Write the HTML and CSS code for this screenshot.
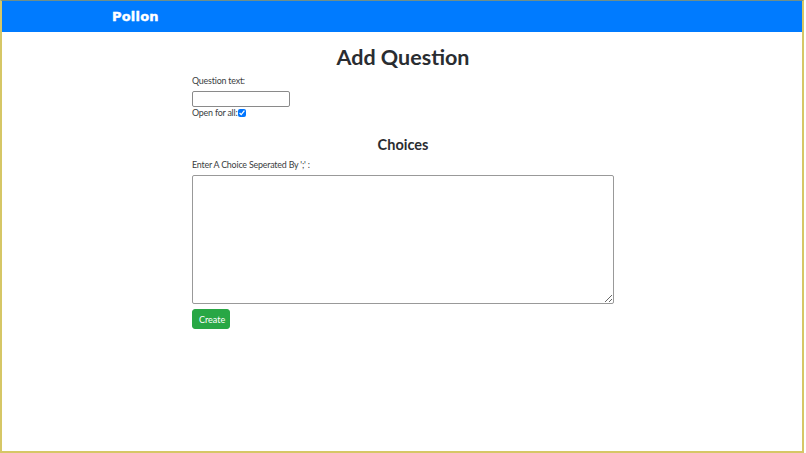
FILE: index.html
```html
<!DOCTYPE html>
<html lang="en">
  <head>
    <meta charset="UTF-8" />
    <meta name="viewport" content="width=device-width, initial-scale=1.0" />
    <title>Pollon - Add Question</title>
    <link rel="stylesheet" href="styles.css">
  </head>
  <body>
    <div class="frame">
      <nav class="navbar">
        <a class="brand" href="#">Pollon</a>
      </nav>

      <div class="container">
        <h1 class="title">Add Question</h1>
        <form class="question-form">
          <label class="field-label" for="question">Question text:</label>
          <input class="text-input" type="text" id="question" name="question">
          <div class="check-row">
            <label for="open">Open for all:</label><input class="check" type="checkbox" id="open" name="open" checked>
          </div>

          <h2 class="subtitle">Choices</h2>
          <label class="field-label" for="choices">Enter A Choice Seperated By ';' :</label>
          <textarea class="choices" id="choices" name="choices"></textarea>
          <button class="btn-create" type="submit">Create</button>
        </form>
      </div>
    </div>
  </body>
</html>
```

FILE: styles.css
```css
body {
  margin: 0;
  padding: 0;
  background: #fff;
  font-family: Lato, "Open Sans", sans-serif;
  color: #212529;
}
.frame {
  width: 804px;
  height: 453px;
  box-sizing: border-box;
  border: 2px solid #d6c766;
  border-top: 1px solid #6f8f8a;
}
.navbar {
  height: 31px;
  background: #007bff;
  display: flex;
  align-items: center;
  padding-left: 110px;
}
.brand {
  font-family: "DejaVu Sans", sans-serif;
  font-weight: bold;
  font-size: 13px;
  color: #fff;
  text-decoration: none;
  letter-spacing: 0.2px;
  -webkit-text-stroke: 0.4px #fff;
}
.container {
  width: 422px;
  margin: 0 auto;
  padding-left: 2px;
}
.title {
  margin: 11px 0 3px;
  text-align: center;
  font-size: 21.5px;
  font-weight: 700;
  line-height: 29px;
  color: #2a2d31;
}
.question-form {
  display: flex;
  flex-direction: column;
  align-items: flex-start;
  font-size: 8.9px;
  letter-spacing: -0.2px;
  line-height: 12px;
  color: #3a3d41;
}
.field-label {
  margin-bottom: 4px;
}
.text-input {
  width: 98px;
  height: 16px;
  box-sizing: border-box;
  border: 1px solid #8a8a8a;
  border-radius: 2px;
  margin: 0;
  padding: 0 3px;
}
.check-row {
  display: flex;
  align-items: center;
}
.check {
  width: 8px;
  height: 8px;
  margin: 0 0 0 1px;
  accent-color: #0075ff;
}
.subtitle {
  align-self: stretch;
  text-align: center;
  font-size: 14.5px;
  font-weight: 700;
  letter-spacing: 0;
  line-height: 19px;
  margin: 16px 0 5px;
  color: #2a2d31;
}
.choices {
  width: 422px;
  height: 129px;
  box-sizing: border-box;
  border: 1px solid #999;
  border-radius: 2px;
  margin: 0;
  resize: vertical;
}
.btn-create {
  margin-top: 5px;
  background: #28a745;
  color: #fff;
  border: 1px solid #28a745;
  border-radius: 3px;
  font-family: inherit;
  font-size: 9px;
  letter-spacing: 0;
  padding: 0 6px;
  height: 20px;
  width: 38px;
  line-height: 1;
}
```
